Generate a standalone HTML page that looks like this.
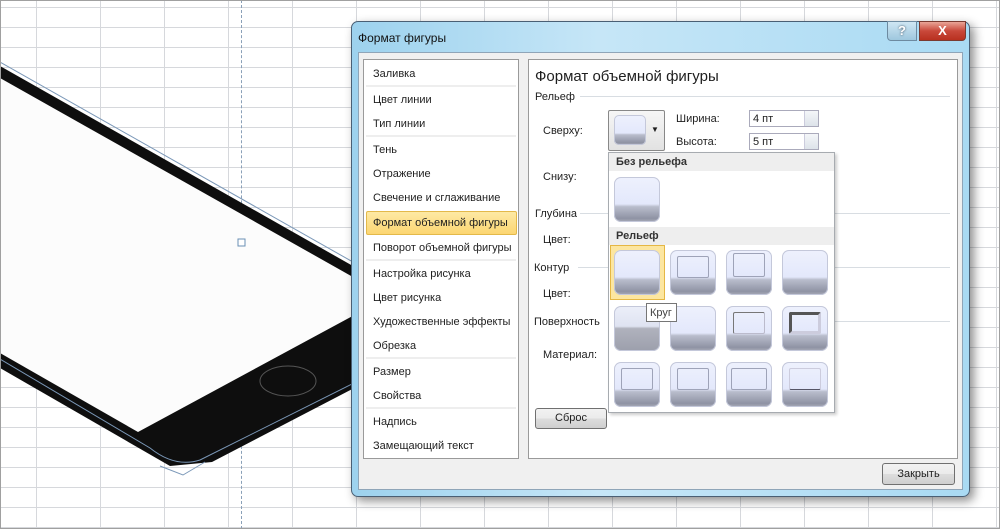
<!DOCTYPE html>
<html><head><meta charset="utf-8"><style>
*{margin:0;padding:0;box-sizing:border-box}
body{width:1000px;height:529px;overflow:hidden;background:#fff;font-family:"Liberation Sans",sans-serif;font-size:11px;color:#1e1e1e;position:relative}
.a{position:absolute}
.grid{position:absolute;left:0;top:0;width:1000px;height:529px;
background-image:linear-gradient(#d6d8dc 1px,transparent 1px),linear-gradient(90deg,#d6d8dc 1px,transparent 1px);
background-size:64px 20px,64px 20px;background-position:0 7px,36px 0}
.frame{left:0;top:0;width:1000px;height:529px;border:1px solid #a0a0a0}
.dlg{left:351px;top:21px;width:619px;height:476px;border:1px solid #4a5f74;border-radius:7px;
background:linear-gradient(90deg,#9dd2ee,#c6e6f7 40%,#a9daf3);box-shadow:4px 4px 10px rgba(0,0,0,.45)}
.client{left:6px;top:30px;width:605px;height:438px;background:#f0f0f0;border:1px solid #8fa5b8}
.list{left:363px;top:59px;width:156px;height:400px;background:#fff;border:1px solid #9a9a9a}
.li{position:absolute;left:9px;font-size:11px}
.sep{position:absolute;left:2px;width:150px;height:2px;background:#eee}
.panel{left:528px;top:59px;width:430px;height:400px;background:#fff;border:1px solid #9a9a9a}
.lbl{position:absolute;font-size:11px}
.hl{position:absolute;height:1px;background:#d8dde2}
.inp{position:absolute;width:70px;height:17px;border:1px solid #aab;background:#fff;padding:2px 3px;font-size:11px}
.spin{position:absolute;right:0;top:0;width:14px;height:15px;background:linear-gradient(#f4f6f9,#dde3ea);border-left:1px solid #ccd}
.btn{position:absolute;border:1px solid #707070;border-radius:3px;background:linear-gradient(#f2f2f2,#ebebeb 50%,#dddddd 51%,#cfcfcf);text-align:center;font-size:11px}
.bev{position:absolute;width:46px;height:45px;border-radius:7px;
background:linear-gradient(#eef1fd 0%,#e3e8fb 60%,#b9bdcc 66%,#8f93a4 92%,#a9acb8 100%);
box-shadow:inset 0 0 0 1px #c4c8da}
.bev i{position:absolute;left:7px;top:6px;width:32px;height:22px;border:1px solid #9ea3b8;border-radius:2px}
</style></head><body>
<div class="grid"></div>
<div class="a" style="left:241px;top:0;width:0;height:529px;border-left:1px dashed #8aa0b8"></div>
<svg class="a" style="left:0;top:0" width="360" height="529">
<polygon points="0,66 360,270 360,385 212,462 170,466 0,368" fill="#0e0e0e"/>
<path d="M0,62 L360,266" stroke="#7b98b8" stroke-width="1"/>
<path d="M0,359 L150,448 Q175,468 200,460 L360,380" stroke="#7b98b8" fill="none"/>
<polygon points="0,78 360,281 360,312 138,432 0,353" fill="#fcfcfc"/>
<ellipse cx="288" cy="381" rx="28" ry="15" fill="none" stroke="#555" stroke-width="1"/>
<path d="M160,466 L183,475 L205,462" stroke="#7b98b8" fill="none"/>
<rect x="238" y="239" width="7" height="7" fill="#fff" stroke="#6a8fb5"/>
</svg>
<div class="a dlg">
 <div class="a" style="left:6px;top:9px;font-size:12px;color:#111">Формат фигуры</div>
 <div class="a" style="left:535px;top:-1px;width:30px;height:20px;border:1px solid #6d8aa0;border-radius:0 0 0 4px;background:linear-gradient(#cfe6f3,#9ec7de);text-align:center;font-size:13px;font-weight:bold;color:#fff;line-height:18px;text-shadow:0 0 2px #345">?</div>
 <div class="a" style="left:567px;top:-1px;width:47px;height:20px;border:1px solid #7a3a30;border-radius:0 0 4px 0;background:linear-gradient(#e9a597,#c9483a 50%,#b8301f);text-align:center;font-size:13px;font-weight:bold;color:#fff;line-height:18px">X</div>
 <div class="a client"></div>
</div>
<div class="a list">
 <div class="li" style="top:8px">Заливка</div><div class="sep" style="top:25px"></div>
 <div class="li" style="top:34px">Цвет линии</div>
 <div class="li" style="top:58px">Тип линии</div><div class="sep" style="top:75px"></div>
 <div class="li" style="top:84px">Тень</div>
 <div class="li" style="top:108px">Отражение</div>
 <div class="li" style="top:132px">Свечение и сглаживание</div>
 <div class="a" style="left:2px;top:151px;width:151px;height:24px;border:1px solid #e3b94a;border-radius:2px;background:linear-gradient(#fde9a4,#fcd672)"></div>
 <div class="li" style="top:157px">Формат объемной фигуры</div>
 <div class="li" style="top:182px">Поворот объемной фигуры</div><div class="sep" style="top:199px"></div>
 <div class="li" style="top:208px">Настройка рисунка</div>
 <div class="li" style="top:232px">Цвет рисунка</div>
 <div class="li" style="top:256px">Художественные эффекты</div>
 <div class="li" style="top:280px">Обрезка</div><div class="sep" style="top:297px"></div>
 <div class="li" style="top:306px">Размер</div>
 <div class="li" style="top:330px">Свойства</div><div class="sep" style="top:347px"></div>
 <div class="li" style="top:356px">Надпись</div>
 <div class="li" style="top:380px">Замещающий текст</div>
</div>
<div class="a panel"></div>
<div class="lbl" style="left:535px;top:68px;font-size:15px">Формат объемной фигуры</div>
<div class="lbl" style="left:535px;top:91px">Рельеф</div><div class="hl" style="left:580px;top:96px;width:370px"></div>
<div class="lbl" style="left:543px;top:125px">Сверху:</div>
<div class="a" style="left:608px;top:110px;width:57px;height:41px;border:1px solid #888;border-radius:2px;background:linear-gradient(#f6f6f6,#e2e2e2)"></div>
<div class="bev" style="left:614px;top:115px;width:32px;height:30px;border-radius:5px"></div>
<div class="lbl" style="left:651px;top:125px;font-size:8px">▼</div>
<div class="lbl" style="left:676px;top:113px">Ширина:</div>
<div class="inp" style="left:749px;top:110px">4 пт<div class="spin"></div></div>
<div class="lbl" style="left:676px;top:136px">Высота:</div>
<div class="inp" style="left:749px;top:133px">5 пт<div class="spin"></div></div>
<div class="lbl" style="left:543px;top:171px">Снизу:</div>
<div class="lbl" style="left:535px;top:208px">Глубина</div><div class="hl" style="left:580px;top:213px;width:370px"></div>
<div class="lbl" style="left:543px;top:234px">Цвет:</div>
<div class="lbl" style="left:534px;top:262px">Контур</div><div class="hl" style="left:578px;top:267px;width:372px"></div>
<div class="lbl" style="left:543px;top:288px">Цвет:</div>
<div class="lbl" style="left:534px;top:316px">Поверхность</div><div class="hl" style="left:608px;top:321px;width:342px"></div>
<div class="lbl" style="left:543px;top:349px">Материал:</div>
<div class="btn" style="left:535px;top:408px;width:72px;height:21px;line-height:19px">Сброс</div>
<div class="btn" style="left:882px;top:463px;width:73px;height:22px;line-height:20px">Закрыть</div>
<div class="a" style="left:608px;top:152px;width:227px;height:261px;background:#fff;border:1px solid #a7abb0;box-shadow:2px 2px 3px rgba(0,0,0,.2)">
 <div class="a" style="left:0;top:0;width:225px;height:18px;background:#eeeeee;font-weight:bold;color:#333;padding:3px 7px">Без рельефа</div>
 <div class="bev" style="left:5px;top:24px"></div>
 <div class="a" style="left:0;top:74px;width:225px;height:18px;background:#eeeeee;font-weight:bold;color:#333;padding:3px 7px">Рельеф</div>
 <div class="a" style="left:1px;top:92px;width:55px;height:55px;border:1px solid #e5b744;background:#fce6a0"></div>
 <div class="bev" style="left:5px;top:97px"></div>
 <div class="bev" style="left:61px;top:97px"><i></i></div>
 <div class="bev" style="left:117px;top:97px"><i style="top:3px;height:24px"></i></div>
 <div class="bev" style="left:173px;top:97px"></div>
 <div class="bev" style="left:5px;top:153px;background:linear-gradient(#eceff9,#dfe3f1 45%,#b0b2bd 50%,#9c9fac)"></div>
 <div class="bev" style="left:61px;top:153px"></div>
 <div class="bev" style="left:117px;top:153px"><i style="border-color:#777 #bbc #bbc #777"></i></div>
 <div class="bev" style="left:173px;top:153px"><i style="border:3px solid #555;border-bottom-color:#ccd;border-right-color:#ccd"></i></div>
 <div class="bev" style="left:5px;top:209px"><i></i></div>
 <div class="bev" style="left:61px;top:209px"><i></i></div>
 <div class="bev" style="left:117px;top:209px"><i style="left:5px;width:36px"></i></div>
 <div class="bev" style="left:173px;top:209px"><i style="border-color:#ccd #ccd #556 #ccd"></i></div>
 <div class="a" style="left:37px;top:150px;width:31px;height:19px;background:#fff;border:1px solid #767676;font-size:11px;padding:3px 3px;color:#444">Круг</div>
</div>
<div class="a frame"></div>
</body></html>
